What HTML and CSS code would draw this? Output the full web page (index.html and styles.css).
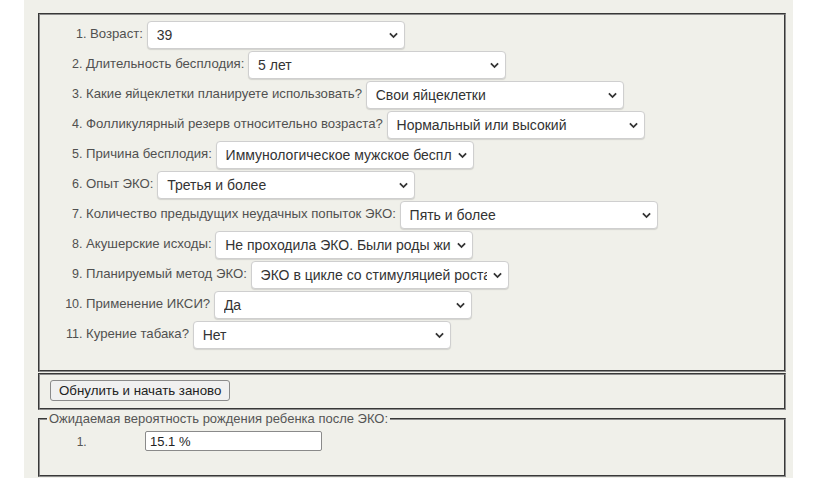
FILE: index.html
```html
<!DOCTYPE html>
<html lang="ru">
<head>
<meta charset="utf-8">
<title>Калькулятор ЭКО</title>
<link rel="stylesheet" href="styles.css">
</head>
<body>
<div class="panel">
  <fieldset class="box questions">
    <ol class="qlist">
      <li class="q-first"><span class="lbl">Возраст:</span> <span class="sel"><select><option>39</option></select><svg class="chev" viewBox="0 0 10 7"><path d="M1 1.2 L5 5.2 L9 1.2"/></svg></span></li>
      <li><span class="lbl">Длительность бесплодия:</span> <span class="sel"><select><option>5 лет</option></select><svg class="chev" viewBox="0 0 10 7"><path d="M1 1.2 L5 5.2 L9 1.2"/></svg></span></li>
      <li><span class="lbl">Какие яйцеклетки планируете использовать?</span> <span class="sel"><select><option>Свои яйцеклетки</option></select><svg class="chev" viewBox="0 0 10 7"><path d="M1 1.2 L5 5.2 L9 1.2"/></svg></span></li>
      <li><span class="lbl">Фолликулярный резерв относительно возраста?</span> <span class="sel"><select><option>Нормальный или высокий</option></select><svg class="chev" viewBox="0 0 10 7"><path d="M1 1.2 L5 5.2 L9 1.2"/></svg></span></li>
      <li><span class="lbl">Причина бесплодия:</span> <span class="sel"><select><option>Иммунологическое мужское бесплодие</option></select><svg class="chev" viewBox="0 0 10 7"><path d="M1 1.2 L5 5.2 L9 1.2"/></svg></span></li>
      <li><span class="lbl">Опыт ЭКО:</span> <span class="sel"><select><option>Третья и более</option></select><svg class="chev" viewBox="0 0 10 7"><path d="M1 1.2 L5 5.2 L9 1.2"/></svg></span></li>
      <li><span class="lbl">Количество предыдущих неудачных попыток ЭКО:</span> <span class="sel"><select><option>Пять и более</option></select><svg class="chev" viewBox="0 0 10 7"><path d="M1 1.2 L5 5.2 L9 1.2"/></svg></span></li>
      <li><span class="lbl">Акушерские исходы:</span> <span class="sel"><select><option>Не проходила ЭКО. Были роды живым ребенком</option></select><svg class="chev" viewBox="0 0 10 7"><path d="M1 1.2 L5 5.2 L9 1.2"/></svg></span></li>
      <li><span class="lbl">Планируемый метод ЭКО:</span> <span class="sel"><select><option>ЭКО в цикле со стимуляцией роста фолликулов</option></select><svg class="chev" viewBox="0 0 10 7"><path d="M1 1.2 L5 5.2 L9 1.2"/></svg></span></li>
      <li><span class="lbl">Применение ИКСИ?</span> <span class="sel"><select><option>Да</option></select><svg class="chev" viewBox="0 0 10 7"><path d="M1 1.2 L5 5.2 L9 1.2"/></svg></span></li>
      <li><span class="lbl">Курение табака?</span> <span class="sel"><select><option>Нет</option></select><svg class="chev" viewBox="0 0 10 7"><path d="M1 1.2 L5 5.2 L9 1.2"/></svg></span></li>
    </ol>
  </fieldset>
  <fieldset class="box actions">
    <button type="button" class="reset">Обнулить и начать заново</button>
  </fieldset>
  <fieldset class="box result">
    <legend class="res-legend">Ожидаемая вероятность рождения ребенка после ЭКО:</legend>
    <ol class="rlist">
      <li><input class="res-input" type="text" value="15.1 %"></li>
    </ol>
  </fieldset>
</div>
</body>
</html>
```
FILE: styles.css
```css
html, body {
  margin: 0;
  padding: 0;
  background: #ffffff;
}

body {
  font-family: "Liberation Sans", Arial, sans-serif;
  color: #444;
}

.panel {
  margin-left: 24px;
  width: 769px;
  height: 478px;
  box-sizing: border-box;
  background: #f0f0ea;
  padding: 13px 7px 0 14px;
}

.box {
  margin: 0;
  width: 748px;
  box-sizing: border-box;
  border: 2px groove #8c8c8c;
  padding: 0;
}

.questions {
  height: 359px;
  padding: 5px 0 0 0;
}

.qlist {
  margin: 0;
  padding-left: 46px;
  font-size: 13.2px;
  color: #505050;
}

.qlist li {
  height: 30px;
  line-height: 28px;
}

.qlist li::marker {
  font-size: 12.5px;
}

.qlist .q-first {
  margin-left: 4px;
}

.sel {
  position: relative;
  display: inline-block;
  vertical-align: middle;
  height: 28px;
}

.sel select {
  -webkit-appearance: none;
  appearance: none;
  width: 258px;
  height: 28px;
  box-sizing: border-box;
  border: 1px solid #cfcfcf;
  border-radius: 4px;
  background: #fff;
  box-shadow: 0 1px 1px rgba(0, 0, 0, 0.12);
  font-family: "Liberation Sans", Arial, sans-serif;
  font-size: 14px;
  color: #333;
  padding: 0 21px 0 9px;
  margin: 0;
  vertical-align: top;
}

.chev {
  position: absolute;
  right: 7px;
  top: 11px;
  width: 9px;
  height: 7px;
  fill: none;
  stroke: #333;
  stroke-width: 2;
  pointer-events: none;
}

.actions {
  height: 37px;
  margin-top: 1px;
  padding: 5px 0 0 10px;
}

.reset {
  height: 21px;
  padding: 0 8px;
  font-family: "Liberation Sans", Arial, sans-serif;
  font-size: 13.3px;
  color: #222;
  background: #f0f0f0;
  border: 1px solid #8a8a8a;
  border-radius: 3px;
  margin: 0;
}

.result {
  margin-top: 1px;
  height: 66px;
  padding: 0;
}

.res-legend {
  margin-left: 7px;
  padding: 0 2px;
  font-size: 13px;
  color: #555;
}

.rlist {
  margin: 5px 0 0 0;
  padding-left: 50px;
  font-size: 12px;
  color: #555;
}

.res-input {
  margin-left: 55px;
  width: 177px;
  height: 20px;
  box-sizing: border-box;
  border: 1px solid #8a8a8a;
  border-radius: 2px;
  padding: 0 4px;
  font-family: "Liberation Sans", Arial, sans-serif;
  font-size: 13px;
  color: #222;
  background: #fff;
}
```
